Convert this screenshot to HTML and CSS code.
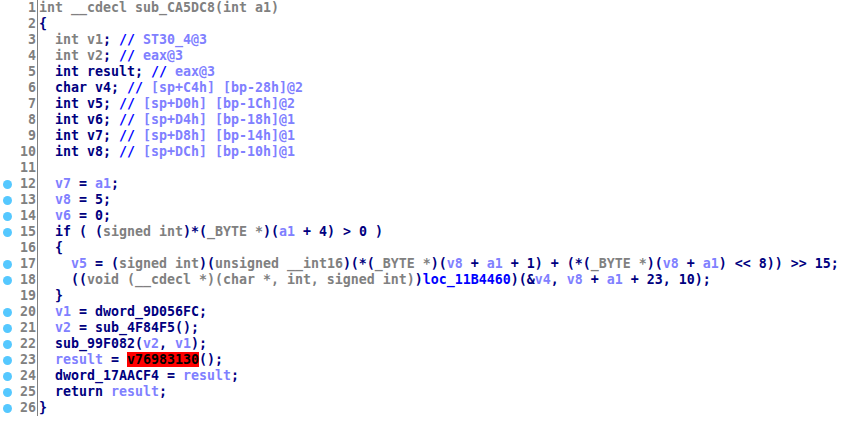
FILE: index.html
```html
<!DOCTYPE html>
<html>
<head>
<meta charset="utf-8">
<link rel="stylesheet" href="styles.css">
</head>
<body>
<div class="view">
<div class="ln"><span class="g"><span class="n">1</span></span><span class="c"><span class="t">int __cdecl sub_CA5DC8(int a1)</span></span></div>
<div class="ln"><span class="g"><span class="n">2</span></span><span class="c">{</span></div>
<div class="ln"><span class="g"><span class="n">3</span></span><span class="c">  <span class="t">int v1</span>; <span class="k">//</span> <span class="v">ST30_4@3</span></span></div>
<div class="ln"><span class="g"><span class="n">4</span></span><span class="c">  <span class="t">int v2</span>; <span class="k">//</span> <span class="v">eax@3</span></span></div>
<div class="ln"><span class="g"><span class="n">5</span></span><span class="c">  int result; <span class="k">//</span> <span class="v">eax@3</span></span></div>
<div class="ln"><span class="g"><span class="n">6</span></span><span class="c">  char v4; <span class="k">//</span> <span class="v">[sp+C4h] [bp-28h]@2</span></span></div>
<div class="ln"><span class="g"><span class="n">7</span></span><span class="c">  int v5; <span class="k">//</span> <span class="v">[sp+D0h] [bp-1Ch]@2</span></span></div>
<div class="ln"><span class="g"><span class="n">8</span></span><span class="c">  int v6; <span class="k">//</span> <span class="v">[sp+D4h] [bp-18h]@1</span></span></div>
<div class="ln"><span class="g"><span class="n">9</span></span><span class="c">  int v7; <span class="k">//</span> <span class="v">[sp+D8h] [bp-14h]@1</span></span></div>
<div class="ln"><span class="g"><span class="n">10</span></span><span class="c">  int v8; <span class="k">//</span> <span class="v">[sp+DCh] [bp-10h]@1</span></span></div>
<div class="ln"><span class="g"><span class="n">11</span></span><span class="c"></span></div>
<div class="ln"><span class="g"><i class="dot"></i><span class="n">12</span></span><span class="c">  <span class="v">v7</span> = <span class="v">a1</span>;</span></div>
<div class="ln"><span class="g"><i class="dot"></i><span class="n">13</span></span><span class="c">  <span class="v">v8</span> = 5;</span></div>
<div class="ln"><span class="g"><i class="dot"></i><span class="n">14</span></span><span class="c">  <span class="v">v6</span> = 0;</span></div>
<div class="ln"><span class="g"><i class="dot"></i><span class="n">15</span></span><span class="c">  if ( (<span class="t">signed int</span>)*(<span class="t">_BYTE *</span>)(<span class="v">a1</span> + 4) &gt; 0 )</span></div>
<div class="ln"><span class="g"><span class="n">16</span></span><span class="c">  {</span></div>
<div class="ln"><span class="g"><i class="dot"></i><span class="n">17</span></span><span class="c">    <span class="v">v5</span> = (<span class="t">signed int</span>)(<span class="t">unsigned __int16</span>)(*(<span class="t">_BYTE *</span>)(<span class="v">v8</span> + <span class="v">a1</span> + 1) + (*(<span class="t">_BYTE *</span>)(<span class="v">v8</span> + <span class="v">a1</span>) &lt;&lt; 8)) &gt;&gt; 15;</span></div>
<div class="ln"><span class="g"><i class="dot"></i><span class="n">18</span></span><span class="c">    ((<span class="t">void (__cdecl *)(char *, int, signed int)</span>)<span class="k">loc_11B4460</span>)(&amp;<span class="v">v4</span>, <span class="v">v8</span> + <span class="v">a1</span> + 23, 10);</span></div>
<div class="ln"><span class="g"><span class="n">19</span></span><span class="c">  }</span></div>
<div class="ln"><span class="g"><i class="dot"></i><span class="n">20</span></span><span class="c">  <span class="v">v1</span> = dword_9D056FC;</span></div>
<div class="ln"><span class="g"><i class="dot"></i><span class="n">21</span></span><span class="c">  <span class="v">v2</span> = sub_4F84F5();</span></div>
<div class="ln"><span class="g"><i class="dot"></i><span class="n">22</span></span><span class="c">  sub_99F082(<span class="v">v2</span>, <span class="v">v1</span>);</span></div>
<div class="ln"><span class="g"><i class="dot"></i><span class="n">23</span></span><span class="c">  <span class="v">result</span> = <span class="hl">v76983130</span>();</span></div>
<div class="ln"><span class="g"><i class="dot"></i><span class="n">24</span></span><span class="c">  dword_17AACF4 = <span class="v">result</span>;</span></div>
<div class="ln"><span class="g"><i class="dot"></i><span class="n">25</span></span><span class="c">  return <span class="v">result</span>;</span></div>
<div class="ln"><span class="g"><i class="dot"></i><span class="n">26</span></span><span class="c">}</span></div>
</div>
</body>
</html>
```
FILE: styles.css
```css
html, body {
  margin: 0;
  padding: 0;
  background: #ffffff;
}
.view {
  font-family: "DejaVu Sans Mono", "Liberation Mono", monospace;
  font-weight: bold;
  font-size: 13.29px;
  color: #000080;
}
.ln {
  display: flex;
  height: 16px;
  line-height: 16px;
}
.g {
  position: relative;
  width: 37px;
  flex: none;
  border-right: 1px solid #808080;
  text-align: right;
  color: #808080;
  box-sizing: content-box;
}
.n {
  padding-right: 1px;
}
.dot {
  position: absolute;
  left: 3px;
  top: 4px;
  width: 9px;
  height: 9px;
  border-radius: 50%;
  background: #55c8ff;
}
.c {
  white-space: pre;
  padding-left: 1px;
}
.t { color: #808080; }
.v { color: #8080ff; }
.k { color: #0000ff; }
.hl { background: #ff0000; color: #000000; }
```
